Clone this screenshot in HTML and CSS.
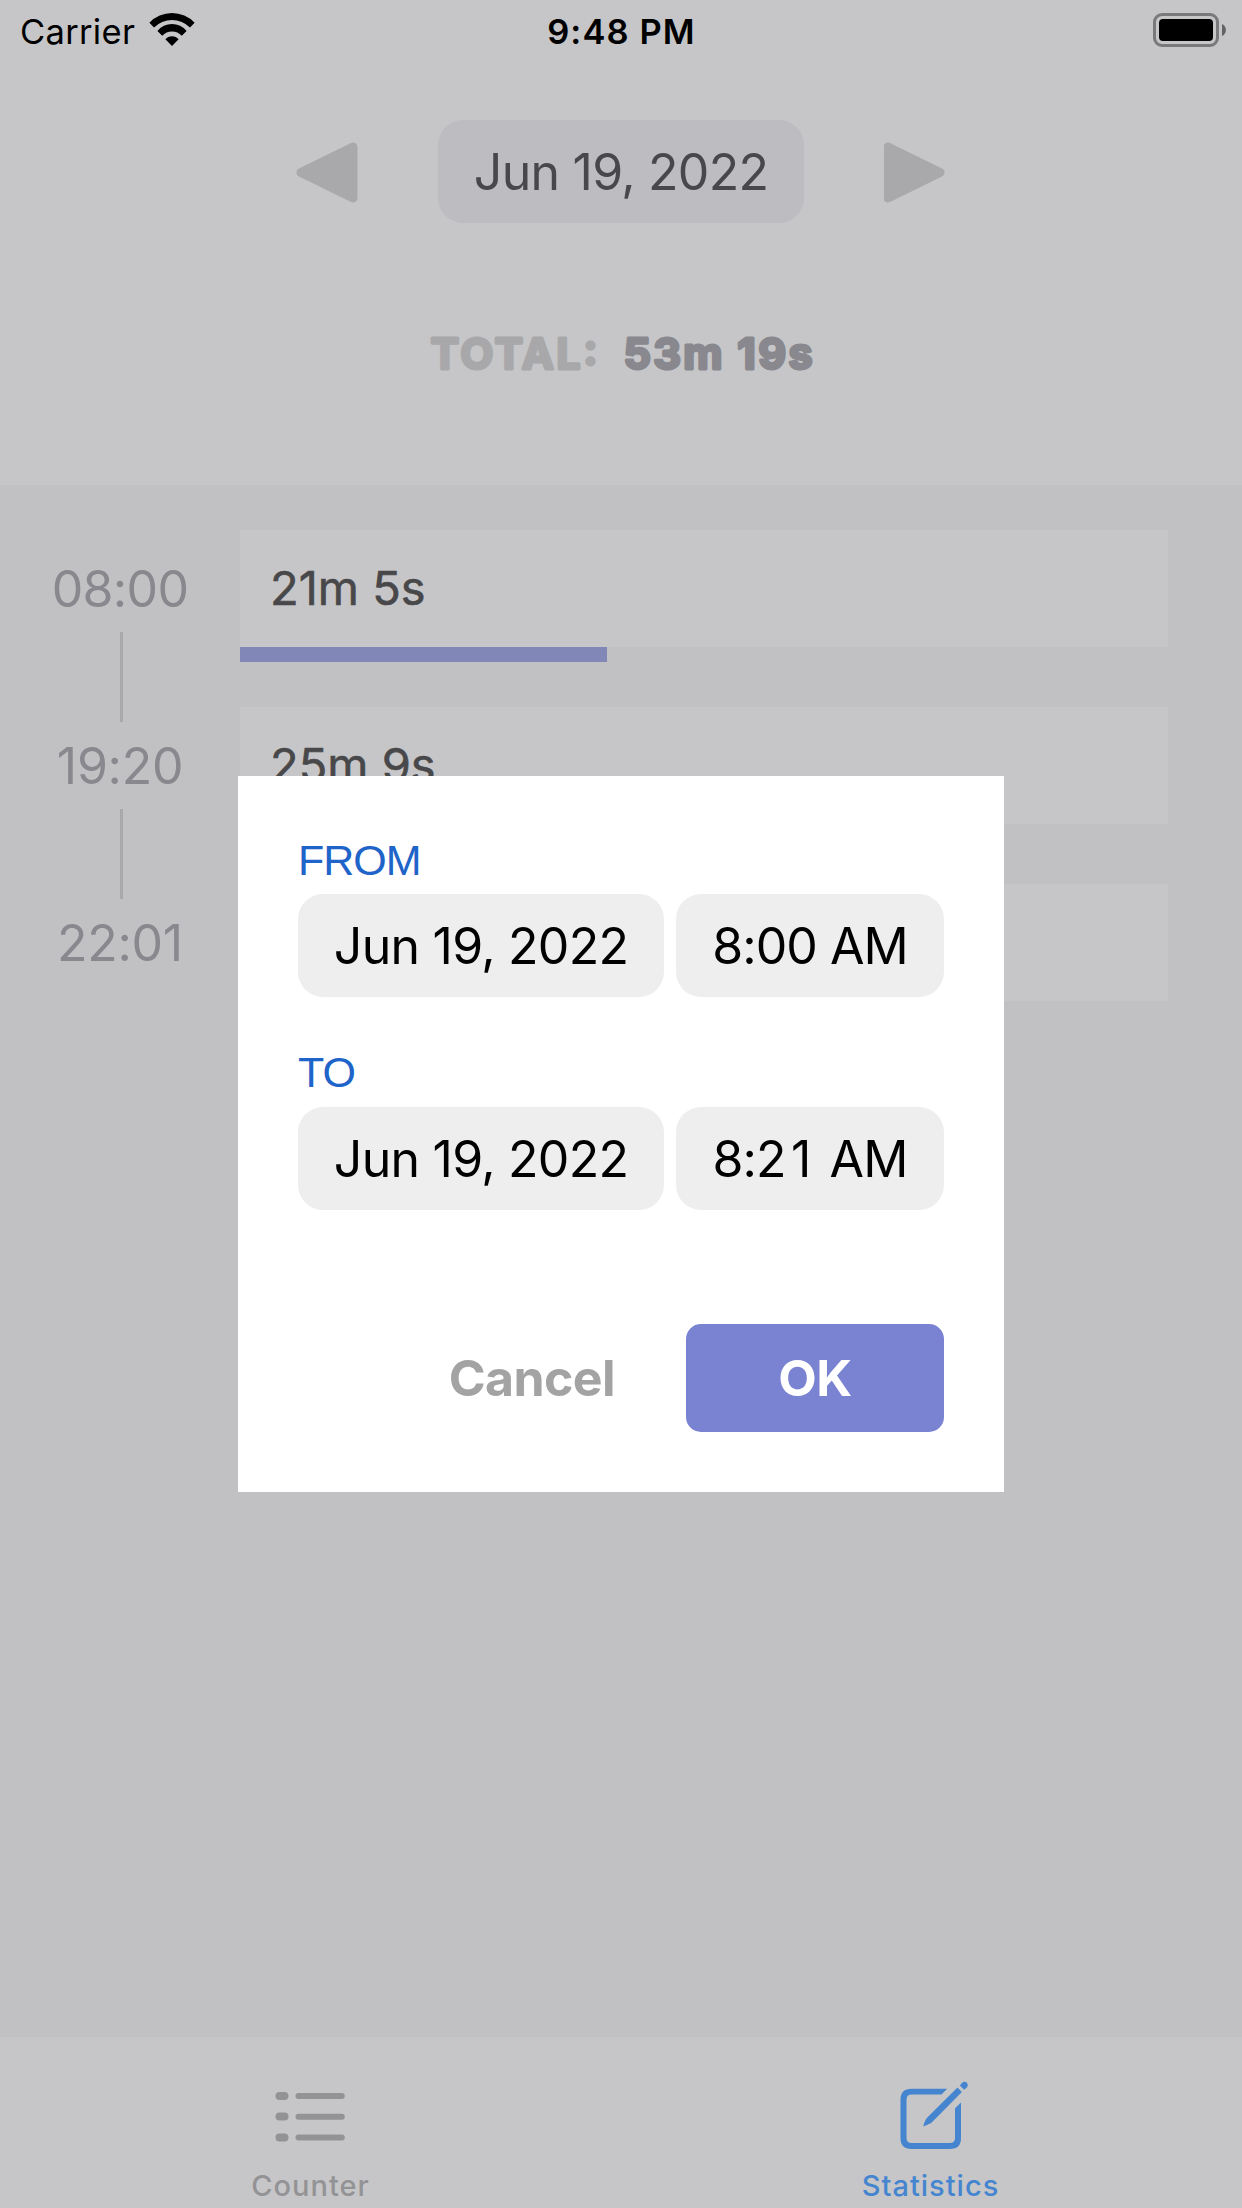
FILE: index.html
```html
<!DOCTYPE html>
<html lang="en">
<head>
<meta charset="utf-8">
<title>Statistics</title>
<link rel="stylesheet" href="styles.css">
</head>
<body>
<div class="screen">
  <header class="top">
    <div class="status">
      <div class="status-left">
        <span class="carrier">Carrier</span>
        <svg class="wifi" width="48" height="36" viewBox="148 12 48 36">
          <path d="M149.4 22.7A31.4 31.4 0 0 1 194.6 22.7L190 27.6A25.4 25.4 0 0 0 154 27.6Z"/>
          <path d="M157.4 31A18.7 18.7 0 0 1 186.6 31L181.8 35.8A13.4 13.4 0 0 0 162.2 35.8Z"/>
          <path d="M165.4 39.3A8.6 8.6 0 0 1 178.6 39.3L172 46Z"/>
        </svg>
      </div>
      <span class="clock">9:48 PM</span>
      <svg class="battery" width="74" height="34" viewBox="0 0 74 34">
        <rect x="1.5" y="1.5" width="63" height="31" rx="7.5" fill="none" stroke="#79797b" stroke-width="3"/>
        <rect x="6" y="6" width="54" height="22" rx="4"/>
        <path d="M69 11A6.6 6.6 0 0 1 69 23Z" fill="#626264"/>
      </svg>
    </div>
    <div class="date-nav">
      <svg class="arrow" width="62" height="62" viewBox="0 0 62 62"><path d="M5 31.5L57 6V57Z"/></svg>
      <div class="date-pill">Jun 19, 2022</div>
      <svg class="arrow" width="62" height="62" viewBox="0 0 62 62"><path d="M56 31.5L4 6V57Z"/></svg>
    </div>
    <svg class="total" width="402" height="62" viewBox="420 322 402 62">
      <text class="total-label" x="430.5" y="369" textLength="167">TOTAL:</text>
      <text class="total-value" x="623.5" y="369" textLength="189">53m 19s</text>
    </svg>
  </header>

  <main class="timeline">
    <div class="entry">
      <div class="when"><span class="time wide">08:00</span><i class="link"></i></div>
      <div class="what"><div class="card">21m 5s</div><div class="bar" style="width:367px"></div></div>
    </div>
    <div class="entry">
      <div class="when"><span class="time">19:20</span><i class="link"></i></div>
      <div class="what"><div class="card">25m 9s</div></div>
    </div>
    <div class="entry">
      <div class="when"><span class="time">22:01</span></div>
      <div class="what"><div class="card"></div></div>
    </div>
  </main>

  <nav class="tabs">
    <div class="tab">
      <svg width="76" height="72" viewBox="272.5 2081 76 72" fill="#939395">
        <rect x="275" y="2092" width="13" height="8" rx="4"/><rect x="295" y="2093" width="49.3" height="6" rx="3"/>
        <rect x="275" y="2112.6" width="13" height="8" rx="4"/><rect x="295" y="2113.7" width="49.3" height="6" rx="3"/>
        <rect x="275" y="2133.4" width="13" height="8" rx="4"/><rect x="295" y="2134.5" width="49.3" height="6" rx="3"/>
      </svg>
      <span>Counter</span>
    </div>
    <div class="tab active">
      <svg width="76" height="72" viewBox="893.5 2081 76 72" fill="#4585cf">
        <path d="M946.7 2088.7H911Q900 2088.7 900 2099.7V2138Q900 2149 911 2149H949.5Q960.5 2149 960.5 2138V2102.5L954.5 2108.2V2138Q954.5 2143 949.5 2143H911Q906 2143 906 2138V2099.7Q906 2094.5 911 2094.5H941Z"/>
        <path d="M957 2087.6L961.4 2092L931.2 2122.4Q930 2123.5 922.6 2126.4Q925 2119 926.3 2118Z"/>
        <path d="M959.4 2085.4L961.4 2083Q964 2080.600 966.3 2082.800Q968.400 2085.400 966 2087.800L963.6 2089.800Z"/>
      </svg>
      <span>Statistics</span>
    </div>
  </nav>

  <section class="dialog">
    <div class="label">FROM</div>
    <div class="fields"><div class="field date">Jun 19, 2022</div><div class="field clock-field">8:00 AM</div></div>
    <div class="label to">TO</div>
    <div class="fields"><div class="field date">Jun 19, 2022</div><div class="field clock-field">8:2<span class="one">1</span> AM</div></div>
    <div class="actions"><span class="cancel">Cancel</span><div class="ok">OK</div></div>
  </section>
</div>
</body>
</html>
```
FILE: styles.css
```css
* { box-sizing: border-box; }
body { margin: 0; font-family: Inter, "Liberation Sans", sans-serif; }
svg { display: block; }

.screen {
  position: relative;
  width: 1242px;
  height: 2208px;
  display: flex;
  flex-direction: column;
  overflow: hidden;
  background: #c1c1c3;
}

/* Header */
.top { height: 485px; background: #c6c6c8; }
.status {
  height: 60px;
  padding: 0 15px 0 20px;
  display: grid;
  grid-template-columns: 1fr auto 1fr;
  align-items: start;
}
.status-left { display: flex; }
.carrier, .clock { font-size: 34.5px; line-height: 63px; white-space: nowrap; }
.carrier { width: 128px; letter-spacing: 0.3px; }
.wifi { margin-top: 12px; }
.clock { margin-right: 4px; font-weight: 600; letter-spacing: 1.1px; }
.battery { margin-top: 13px; justify-self: end; }

.date-nav {
  height: 103px;
  margin-top: 60px;
  display: flex;
  justify-content: center;
  align-items: center;
  gap: 80px;
}
.arrow path {
  fill: #a9a9ab;
  stroke: #a9a9ab;
  stroke-width: 9px;
  stroke-linejoin: round;
}
.date-pill {
  width: 366px;
  height: 103px;
  border-radius: 25px;
  background: #bdbcc1;
  color: #48484a;
  font-size: 50px;
  line-height: 105px;
  letter-spacing: -0.75px;
  text-align: center;
}

.total {
  margin: 99px auto 0;
  font-size: 43px;
  font-weight: 700;
  stroke-width: 3px;
  stroke-linejoin: round;
}
.total-label { fill: #a8a8aa; stroke: #a8a8aa; }
.total-value { fill: #88888e; stroke: #88888e; }

/* Timeline */
.timeline { flex: 1; padding-top: 45px; }
.entry { height: 177px; display: flex; }
.when { width: 240px; padding-left: 2px; display: flex; flex-direction: column; align-items: center; }
.time {
  height: 102px;
  flex: none;
  padding-right: 2px;
  color: #88888e;
  font-size: 50px;
  line-height: 119px;
  letter-spacing: -0.3px;
}
.time.wide { letter-spacing: -0.7px; }
.link { flex: none; width: 3px; height: 90px; margin-left: 1px; background: #a9a9ab; }
.what { width: 928px; }
.card {
  height: 117px;
  padding-left: 30px;
  background: #c6c6c8;
  color: #48484a;
  font-size: 47px;
  line-height: 116px;
  -webkit-text-stroke: 0.6px #48484a;
}
.bar { height: 15px; background: #8187b6; }

/* Tab bar */
.tabs { height: 171px; display: flex; background: #c6c6c8; }
.tab {
  flex: 1;
  padding-top: 44px;
  display: flex;
  flex-direction: column;
  align-items: center;
  color: #939395;
  font-size: 29px;
  font-weight: 500;
  line-height: 42px;
  letter-spacing: 1px;
}
.tab svg { height: 72px; margin-bottom: 12px; }
.tab.active { color: #4585cf; }
.tab.active span { margin-right: 2px; }

/* Edit dialog, floating above the screen */
.dialog {
  position: absolute;
  left: 238px;
  top: 776px;
  width: 766px;
  height: 716px;
  padding: 50px 60px 60px;
  background: #fff;
}
.label {
  height: 68px;
  color: #1f64c8;
  font: 43px/69px "Liberation Sans", sans-serif;
  letter-spacing: -1px;
}
.label.to { height: 74px; margin-top: 36px; line-height: 79px; }
.fields { display: flex; gap: 12px; }
.field {
  height: 103px;
  border-radius: 25px;
  background: #eeeeef;
  color: #000;
  font-size: 50px;
  line-height: 104px;
  text-align: center;
  white-space: nowrap;
}
.date { width: 366px; letter-spacing: -0.75px; }
.clock-field { width: 268px; letter-spacing: -0.95px; }
.one { padding: 0 6px 0 5.5px; }
.actions {
  margin-top: 114px;
  display: flex;
  justify-content: flex-end;
  align-items: center;
  gap: 71px;
  font-size: 50px;
  font-weight: 700;
  line-height: 108px;
  letter-spacing: -0.6px;
}
.cancel { color: #a3a3a3; }
.ok {
  width: 258px;
  height: 108px;
  border-radius: 15px;
  background: #7a82d2;
  color: #fff;
  text-align: center;
}
```
